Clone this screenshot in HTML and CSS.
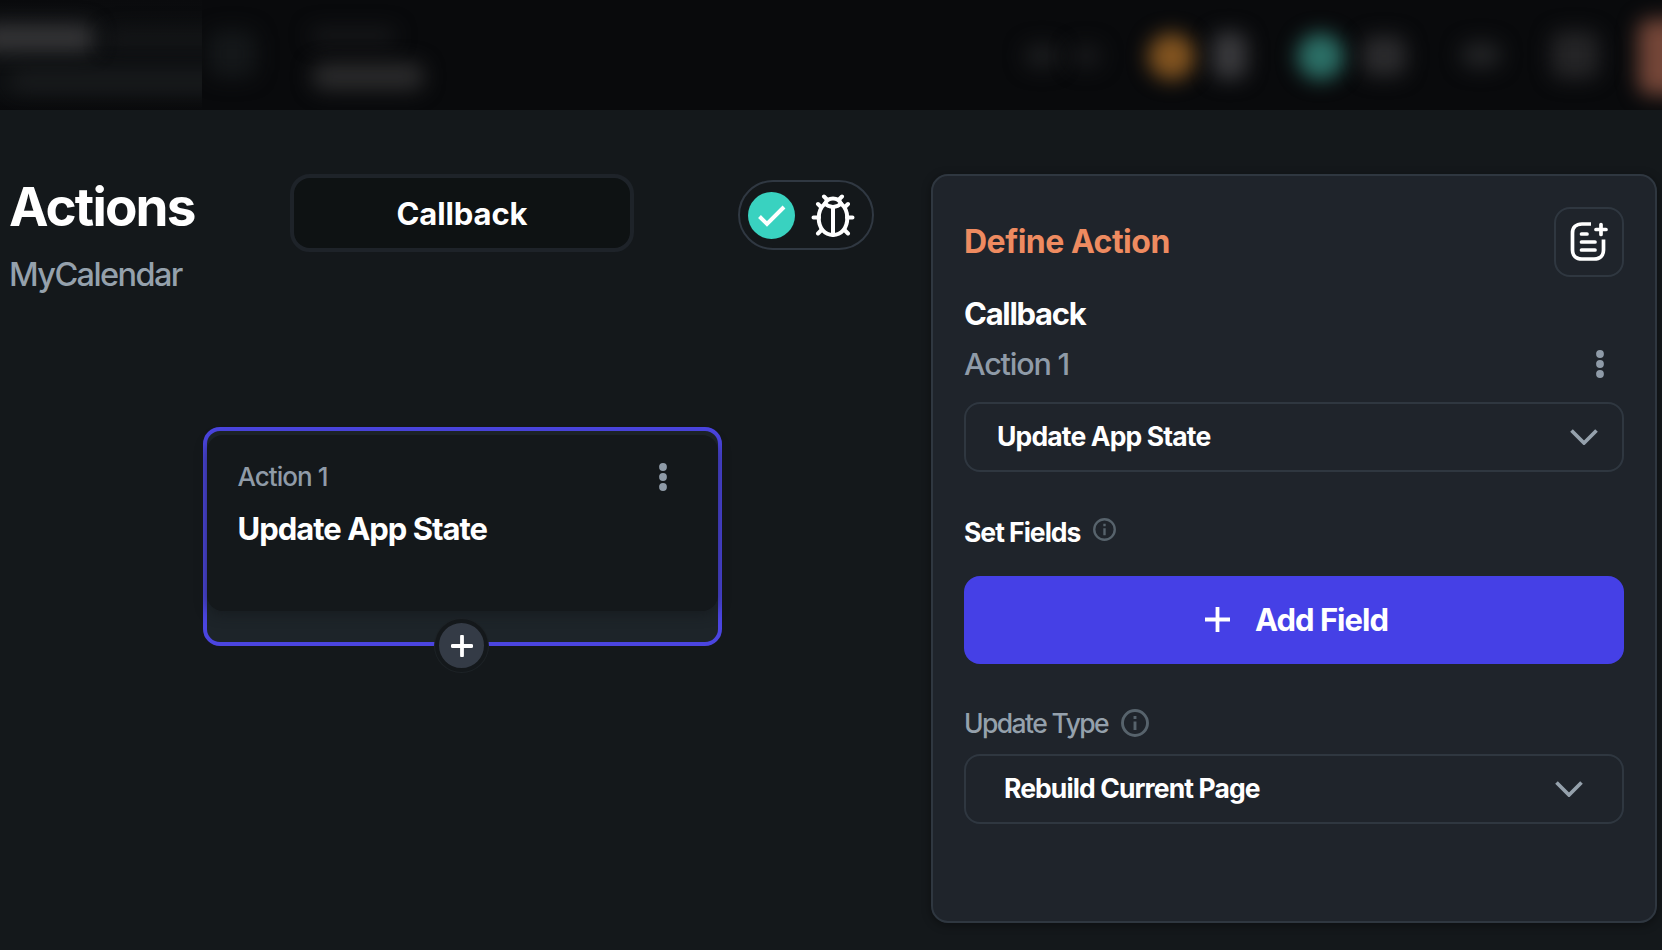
FILE: index.html
```html
<!DOCTYPE html>
<html lang="en">
<head>
<meta charset="utf-8">
<title>Actions</title>
<link rel="stylesheet" href="styles.css">
</head>
<body>
<header class="topbar">
  <div class="glow-left"><i class="glow g1"></i><i class="glow g2"></i><i class="glow g3"></i></div>
  <i class="glow g4"></i><i class="glow g5"></i><i class="glow g6"></i>
  <i class="glow g7"></i><i class="glow g8"></i><i class="glow g9"></i><i class="glow g10"></i>
  <i class="glow g11"></i><i class="glow g12"></i><i class="glow g13"></i><i class="glow g14"></i><i class="glow g15"></i>
</header>
<main class="main">
  <section class="workspace">
    <div class="head">
      <div class="titles">
        <h1 class="title"><span>Actions</span></h1>
        <p class="subtitle"><span>MyCalendar</span></p>
      </div>
      <div class="tab"><span>Callback</span></div>
      <div class="pill">
        <svg class="check" viewBox="0 0 47 47"><circle cx="23.5" cy="23.5" r="23.5" fill="#39d2c0"/><path d="M11.5 24.500l7.500 7.500 17-17" fill="none" stroke="#fff" stroke-width="4"/></svg>
        <svg class="bug" viewBox="0 0 44 44" fill="none" stroke="#fff" stroke-width="4" stroke-linecap="round" stroke-linejoin="round"><path d="M22 13v28M14 9.500c1.500-3.500 4.500-5 8-5s6.500 1.500 8 5"/><path d="M14 9.500c4 4.500 12 4.500 16 0 4 3.500 6.300 8.500 6.300 14.500 0 10-6 17-14.300 17S7.700 34 7.700 24c0-6 2.300-11 6.300-14.500z"/><path d="M16 5.500l-3-3M28 5.500l3-3M10 13l-3-3M34 13l3-3M8 23.500H2.500M36 23.500h5.500M10.500 36l-3.500 3.500M33.500 36l3.500 3.500"/></svg>
      </div>
    </div>
    <article class="node">
      <div class="node-body">
        <div class="node-top">
          <span class="node-step">Action 1</span>
          <svg class="dots" viewBox="0 0 8 28" fill="#8f9ba8"><circle cx="4" cy="4" r="3.900"/><circle cx="4" cy="14" r="3.900"/><circle cx="4" cy="24" r="3.900"/></svg>
        </div>
        <div class="node-name"><span>Update App State</span></div>
      </div>
      <button class="node-add"><svg viewBox="0 0 22 22" stroke="#fff" stroke-width="3.800" stroke-linecap="round"><path d="M11 1.500v19M1.500 11h19"/></svg></button>
    </article>
  </section>
  <aside class="panel">
    <div class="panel-head">
      <h2 class="panel-title">Define Action</h2>
      <button class="note"><svg viewBox="0 0 38 40" fill="none" stroke="#fff" stroke-width="3.700" stroke-linecap="round"><path d="M21 3H12C6 3 2.500 6.500 2.500 12v17c0 5.500 3.500 9 9.500 9h12c6 0 9.500-3.500 9.500-9V18.500" stroke-linecap="butt"/><path d="M31 3.500v10M26 8.500h10"/><path d="M11.500 13h5.500M11.500 21h13.500M11.500 29h13.500"/></svg></button>
    </div>
    <div class="trigger">Callback</div>
    <div class="step"><span>Action 1</span><svg class="dots" viewBox="0 0 8 28" fill="#8f9ba8"><circle cx="4" cy="4" r="3.900"/><circle cx="4" cy="14" r="3.900"/><circle cx="4" cy="24" r="3.900"/></svg></div>
    <div class="select"><span class="opt-state">Update App State</span><svg class="chev" viewBox="0 0 28 16"><path d="M1.500 1.500l12.500 12.500 12.500-12.500"/></svg></div>
    <div class="label fields"><span>Set Fields</span><svg class="info-sm" viewBox="0 0 28 28"><circle cx="14" cy="14" r="12.500"/><path d="M14 12.500v8.500M14 7v3"/></svg></div>
    <button class="add"><svg viewBox="0 0 25 25"><path d="M12.500 0v25M0 12.500h25" stroke="#fff" stroke-width="3.800"/></svg><span>Add Field</span></button>
    <div class="label type"><span>Update Type</span><svg class="info-lg" viewBox="0 0 28 28"><circle cx="14" cy="14" r="12.500"/><path d="M14 12.500v8.500M14 7v3"/></svg></div>
    <div class="select rebuild"><span class="opt-rebuild">Rebuild Current Page</span><svg class="chev" viewBox="0 0 28 16"><path d="M1.500 1.500l12.500 12.500 12.500-12.500"/></svg></div>
  </aside>
</main>
</body>
</html>
```
FILE: styles.css
```css
* { box-sizing: border-box; }
body { margin: 0; width: 1662px; height: 950px; overflow: hidden; background: #14181b; color: #fff; font-family: Inter, "Liberation Sans", sans-serif; font-weight: 700; }
h1, h2, p { margin: 0; font-size: inherit; font-weight: inherit; }
button { font: inherit; color: inherit; border: 0; padding: 0; background: none; }
svg { display: block; flex: none; }
span { white-space: nowrap; }

/* dimmed toolbar behind the dialog */
.topbar { position: relative; height: 110px; overflow: hidden; background: #090a0c; }
.glow-left { position: absolute; left: 0; top: 0; width: 202px; height: 110px; overflow: hidden; background: linear-gradient(#0a0b0d, #0d0f11 40%, #0d0f11 80%, #090a0c); }
.glow { position: absolute; filter: blur(10px); border-radius: 12px; background: #1b1c1e; }
.g1 { left: -20px; top: 24px; width: 115px; height: 28px; background: #353537; }
.g2 { left: 105px; top: 30px; width: 140px; height: 18px; background: #151618; }
.g3 { left: 10px; top: 70px; width: 230px; height: 22px; background: #191b1d; }
.g4 { left: 208px; top: 30px; width: 48px; height: 48px; background: #141719; clip-path: inset(-30px -30px -30px -6px); }
.g5 { left: 310px; top: 28px; width: 86px; height: 15px; background: #18191b; }
.g6 { left: 312px; top: 63px; width: 112px; height: 27px; background: #2b2b2c; }
.g7 { left: 1024px; top: 44px; width: 36px; height: 24px; }
.g8 { left: 1070px; top: 44px; width: 32px; height: 24px; background: #17181a; }
.g9 { left: 1148px; top: 33px; width: 47px; height: 47px; border-radius: 50%; background: #825420; }
.g10 { left: 1212px; top: 32px; width: 35px; height: 47px; background: #39393c; }
.g11 { left: 1297px; top: 33px; width: 47px; height: 47px; border-radius: 50%; background: #2c7067; }
.g12 { left: 1362px; top: 36px; width: 44px; height: 40px; background: #2b2b2d; }
.g13 { left: 1461px; top: 42px; width: 40px; height: 26px; background: #222325; }
.g14 { left: 1551px; top: 31px; width: 48px; height: 48px; background: #242426; }
.g15 { left: 1638px; top: 19px; width: 60px; height: 76px; background: #744638; }

.main { display: flex; justify-content: space-between; height: 840px; padding: 64px 5px 0 0; }
.workspace { width: 900px; }

.head { display: flex; height: 120px; }
.titles { width: 290px; padding-left: 9px; }
.title { height: 66px; line-height: 67px; font-size: 53px; letter-spacing: -1.850px; }
.subtitle { height: 69px; line-height: 69px; font-size: 32.500px; font-weight: 500; letter-spacing: -1.600px; color: #95a1ac; }
.tab { display: flex; align-items: center; justify-content: center; width: 344px; height: 78px; border: 4px solid #1e2329; border-radius: 20px; background: #0e1213; font-size: 31px; letter-spacing: -0.100px; }
.pill { display: flex; align-items: center; width: 136px; height: 70px; margin: 6px 0 0 104px; padding-left: 8px; border: 2px solid #303842; border-radius: 35px; }
.check { width: 47px; height: 47px; }
.bug { width: 44px; height: 44px; margin: 1px 0 0 16px; }

.node { position: relative; width: 519px; height: 219px; margin: 133px 0 0 203px; padding-top: 4px; border: 4.500px solid #4b45e0; border-radius: 17px; background: #1d2429; }
.node-body { height: 176px; padding: 21px 51.500px 0 30.500px; border-radius: 16px; background: #14181b; box-shadow: 0 4px 12px #14181b99; }
.node-top { display: flex; justify-content: space-between; align-items: center; height: 40px; font-size: 26px; font-weight: 500; letter-spacing: -0.950px; color: #8f9ba8; }
.dots { width: 8px; height: 28px; }
.node-top .dots { margin-top: 2px; }
.node-name { height: 40px; margin-top: 13px; line-height: 40px; font-size: 31px; letter-spacing: -1px; }
.node-add { position: absolute; left: 228px; top: 188px; display: grid; place-items: center; width: 53px; height: 53px; border: 4.500px solid #14181b; border-radius: 50%; background: #343b46; box-shadow: 0 0 0 1px #1d2226; }
.node-add svg { width: 22px; height: 22px; }

.panel { width: 726px; height: 749px; padding: 31px 31px 0; border: 2px solid #2f3740; border-radius: 17px; background: #1f242b; box-shadow: 0 2px 10px #0006; }
.panel-head { display: flex; justify-content: space-between; align-items: center; height: 70px; }
.panel-title { margin-top: -2px; font-size: 32px; letter-spacing: -0.500px; color: #ee8b60; }
.note { display: grid; place-items: center; width: 70px; height: 70px; border: 2px solid #2f3740; border-radius: 16px; }
.note svg { width: 38px; height: 40px; margin-top: -2px; }
.trigger { height: 50px; margin-top: 12px; line-height: 50px; font-size: 31px; letter-spacing: -1.300px; }
.step { display: flex; justify-content: space-between; align-items: center; height: 50px; padding-right: 20px; font-size: 30.500px; font-weight: 500; letter-spacing: -1.200px; color: #8f9ba8; }
.step span { margin-top: -2px; }
.select { display: flex; justify-content: space-between; align-items: center; height: 70px; margin-top: 13px; padding: 0 24.500px 0 31px; border: 2px solid #2f3740; border-radius: 16px; font-size: 26.500px; }
.select span { margin-top: -2px; }
.chev { width: 28px; height: 16px; fill: none; stroke: #95a1ac; stroke-width: 3.700; }
.opt-state { letter-spacing: -0.850px; }
.opt-rebuild { letter-spacing: -0.900px; }
.label { display: flex; align-items: center; height: 40px; font-size: 26.500px; letter-spacing: -1px; }
.label svg { fill: none; stroke: #57636c; stroke-width: 2.900; }
.fields { margin-top: 40px; }
.info-sm { width: 23px; height: 23px; margin: -6px 0 0 13px; }
.add { display: flex; align-items: center; justify-content: center; width: 100%; height: 88px; margin-top: 24px; padding-left: 5px; gap: 25px; border-radius: 16px; background: #4540e6; font-size: 31px; letter-spacing: -1px; }
.add svg { width: 25px; height: 25px; margin-top: -2px; }
.add span { margin-top: -2px; }
.type { margin-top: 39px; font-weight: 500; letter-spacing: -1.600px; color: #95a1ac; }
.info-lg { width: 28px; height: 28px; margin-left: 13px; }
.rebuild { margin-top: 11px; padding: 0 39.500px 0 38px; }
```
